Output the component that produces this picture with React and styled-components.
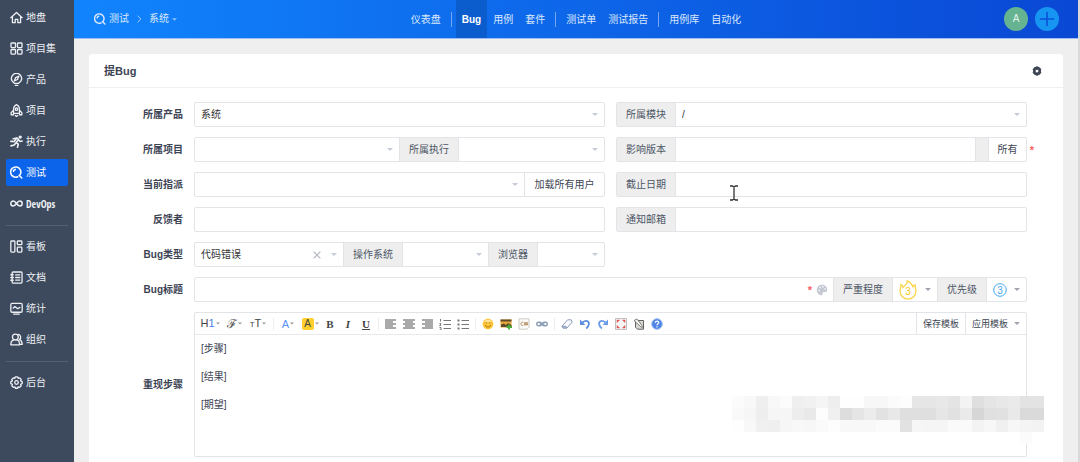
import React from 'react'
import styled, { createGlobalStyle, css } from 'styled-components'

const GlobalStyle = createGlobalStyle`
  * {
    box-sizing: border-box;
  }
  body {
    margin: 0;
    background: #efefef;
    color: #3c4353;
    font-family: 'Liberation Sans', 'Noto Sans CJK SC', sans-serif;
    font-size: 10px;
    line-height: 16px;
  }
  button, input, select {
    margin: 0;
    padding: 0;
    border: 0;
    background: none;
    color: inherit;
    font: inherit;
  }
  a {
    color: inherit;
    text-decoration: none;
  }
`

/* ---------- icons ---------- */

const LineIcon = styled.svg.attrs({ viewBox: '0 0 16 16' })`
  flex: none;
  width: ${p => p.$size || 13}px;
  height: ${p => p.$size || 13}px;
  fill: none;
  stroke: currentColor;
  stroke-width: ${p => p.$weight || 1.6};
  stroke-linecap: round;
  stroke-linejoin: round;
`

const SearchIcon = props => (
  <LineIcon $weight={1.9} {...props}>
    <path d="M9.600 13.200A6.300 6.300 0 1 1 12.600 10.400M11.200 11.400l3.300 3.400M4.200 6.400A3.400 3.400 0 0 1 6.400 4.200" />
  </LineIcon>
)

const icons = {
  home: <LineIcon><path d="M1 8.2 8 1.8l7 6.4M3 7.2v7.2h3.4v-4h3.2v4H13V7.2" /></LineIcon>,
  grid: (
    <LineIcon>
      <rect x="1.2" y="1.2" width="5.6" height="5.6" rx="1" />
      <rect x="9.2" y="1.2" width="5.6" height="5.6" rx="1" />
      <rect x="1.2" y="9.2" width="5.6" height="5.6" rx="1" />
      <rect x="9.2" y="9.2" width="5.6" height="5.6" rx="1" />
    </LineIcon>
  ),
  product: (
    <LineIcon>
      <path d="M5.600 12.800C3 11 1.600 9 1.600 6.900a6.400 6.400 0 0 1 12.800 0c0 2.100-1.400 4.100-4 5.900z" />
      <path d="M6.400 15.200h3.200M11 3.800 9.200 8 5.200 9.800 7 5.600z" />
    </LineIcon>
  ),
  project: (
    <LineIcon>
      <path d="M4.400 11.600V6.200C4.400 4 6 1.800 8 .8c2 1 3.600 3.200 3.600 5.400v5.400zM4.400 7.600 1.400 10.800v2.400h3M11.600 7.600l3 3.200v2.400h-3M6.600 14.200 8 15.400l1.400-1.200" />
      <circle cx="8" cy="6.400" r="1.500" />
    </LineIcon>
  ),
  run: (
    <LineIcon $weight={2}>
      <circle cx="12.600" cy="2.600" r="1.100" fill="currentColor" />
      <path d="M4 4.600 8.400 3.600 10.600 5.400 7.400 9.400 10.200 11.200 9.200 15M7.200 9.800 5.200 12.400 1.200 13.400M10.400 5.800l2 2.200 2.600-.6M8 4.400 5 8.200M1 7.800h2.400" />
    </LineIcon>
  ),
  test: <SearchIcon />,
  devops: (
    <LineIcon $weight={1.8}>
      <path d="M8 8C6.600 6 5.600 5 4 5a3 3 0 0 0 0 6c1.600 0 2.600-1 4-3s2.400-3 4-3a3 3 0 0 1 0 6c-1.600 0-2.600-1-4-3z" />
    </LineIcon>
  ),
  kanban: (
    <LineIcon>
      <rect x="1" y="1.200" width="5" height="13.600" rx="1" />
      <rect x="9" y="1.200" width="5.600" height="4.600" rx="1" />
      <rect x="9" y="8.800" width="5.600" height="6" rx="1" />
    </LineIcon>
  ),
  doc: (
    <LineIcon>
      <rect x="2.600" y="1.200" width="12.200" height="13.600" rx="1.200" />
      <path d="M1 4.600h3M1 8h3M1 11.400h3M7 4.800h5M7 8h5M7 11.200h5" />
    </LineIcon>
  ),
  chart: (
    <LineIcon>
      <rect x="1" y="1.800" width="14" height="10.800" rx="1.600" />
      <path d="M3.800 7.600 6 5.600l3.400 2.600 2.800-1.400M4.600 15h6.800" />
    </LineIcon>
  ),
  team: (
    <LineIcon>
      <circle cx="6.600" cy="5" r="3.600" />
      <path d="M1 14.600c0-3.400 1.600-5.400 3.800-6M8.400 8.600c2.200.6 3.400 2.600 3.400 6H1M10 1.800a3.500 3.500 0 0 1 1.600 6.400c2.200.8 3.400 2.800 3.400 5.800h-3" />
    </LineIcon>
  ),
  admin: (
    <LineIcon>
      <path d="M6.600 1h2.800l.6 1.900 1.900-.6 1.900 2-.8 1.800 2 .8v2.500l-2 .8.8 1.800-1.900 2-1.900-.7-.6 1.800H6.600L6 13.300l-1.900.7-1.900-2 .8-1.800-2-.8V6.900l2-.8-.8-1.800 1.900-2 1.900.6z" />
      <circle cx="8" cy="8" r="2.200" />
    </LineIcon>
  ),
}

const CaretSvg = styled.svg.attrs({ viewBox: '0 0 6 3' })`
  flex: none;
  width: ${p => p.$width || 6}px;
  height: 3px;
  fill: currentColor;
`

const Caret = props => <CaretSvg {...props}><path d="M0 0h6L3 3z" /></CaretSvg>

/* ---------- frame ---------- */

const Shell = styled.div`
  display: flex;
  min-height: 100vh;
`

const Sidebar = styled.nav`
  flex: none;
  width: 74px;
  padding: 4px 6px;
  background: #3d4a5d;
`

const MenuList = styled.ul`
  display: flex;
  flex-direction: column;
  gap: 4px;
  margin: 0;
  padding: 0;
  list-style: none;

  & + & {
    margin-top: 8px;
    padding-top: 7px;
    border-top: 1px solid #536072;
  }
`

const MenuLink = styled.a`
  display: flex;
  align-items: center;
  gap: 3px;
  height: 27px;
  padding-left: 4px;
  border-radius: 2px;
  color: #eef0f4;
  white-space: nowrap;
  ${p => p.$narrow && css`
    font-family: 'Liberation Sans Narrow', 'Open Sans Condensed', 'Roboto Condensed', 'Liberation Sans', sans-serif;
  `}
  ${p => p.$active && css`
    background: #0c64eb;
    color: #fff;
  `}
`

const Main = styled.div`
  display: flex;
  flex: 1;
  flex-direction: column;
  min-width: 0;
  border-right: 2px solid #d9d9d9;
`

const Header = styled.header`
  display: grid;
  flex: none;
  grid-template-columns: 1fr auto 1fr;
  align-items: center;
  height: 39px;
  border-bottom: 1px solid #9dbdf3;
  background: linear-gradient(90deg, #1184fd, #0a48d4);
  background-clip: padding-box;
  color: #dbe8fd;
`

const Crumbs = styled.div`
  display: flex;
  align-items: center;
  padding-left: 20px;
`

const CrumbLink = styled.a`
  display: flex;
  align-items: center;
  gap: 3px;
`

const CrumbArrow = styled(LineIcon)`
  margin: 0 5px;
  opacity: 0.7;
`

const TopNav = styled.nav`
  display: flex;
  align-items: center;
`

const TopLink = styled.a`
  height: 38px;
  padding: 0 6px;
  line-height: 40px;
  ${p => p.$active && css`
    background: #0b5ccd;
    color: #fff;
    font-weight: bold;
  `}
`

const TopDivider = styled.span`
  width: 1px;
  height: 15px;
  margin: 0 4px;
  background: #75a5f4;
`

const UserTools = styled.div`
  display: flex;
  justify-content: flex-end;
  gap: 7px;
  padding-right: 19px;
`

const RoundButton = styled.button`
  display: flex;
  align-items: center;
  justify-content: center;
  width: 24px;
  height: 24px;
  border-radius: 50%;
  background: ${p => p.$bg};
  color: ${p => p.$color};
`

const Card = styled.main`
  flex: 1;
  margin: 15px 15px 0;
  border-radius: 3px 3px 0 0;
  background: #fff;
`

const CardHead = styled.div`
  display: flex;
  align-items: center;
  justify-content: space-between;
  height: 34px;
  padding: 0 21px 0 15px;
  border-bottom: 1px solid #f0f0f0;
`

const CardTitle = styled.h1`
  margin: 0;
  font-size: 11px;
  font-weight: bold;
`

const IconButton = styled.button`
  display: flex;
`

/* ---------- form ---------- */

const Form = styled.form`
  display: grid;
  grid-template-columns: 94px minmax(0, 1fr) minmax(0, 1fr);
  gap: 10px 11px;
  padding: 14px 36px 5px 0;
`

const Label = styled.label`
  grid-column: 1;
  align-self: center;
  font-weight: bold;
  text-align: right;
`

const Group = styled.div`
  position: relative;
  display: flex;
  grid-column: ${p => p.$col || 'auto'};
  height: 25px;
  border: 1px solid #e3e4e8;
  border-radius: 2px;
`

const Addon = styled.label`
  flex: none;
  width: ${p => p.$short ? 50 : 60}px;
  border: solid #e3e4e8;
  border-width: 0 1px;
  background: #eeeeee;
  color: #4d5666;
  line-height: 24px;
  text-align: center;

  &:first-child {
    width: 59px;
    border-left: 0;
  }
`

const Field = styled.input`
  flex: 1;
  min-width: 0;
  padding: 0 6px;
  outline: 0;
`

const PickWrap = styled.div`
  position: relative;
  display: flex;
  flex: ${p => p.$width ? `0 0 ${p.$width}px` : '1'};
  min-width: 0;
`

const PickSelect = styled.select`
  flex: 1;
  min-width: 0;
  padding: 0 6px;
  appearance: none;
  color: #333;
`

const PickCaret = styled(Caret)`
  position: absolute;
  top: 10px;
  right: 6px;
  color: #c6cbd8;
  pointer-events: none;
`

const ClearButton = styled.button`
  position: absolute;
  top: 4px;
  right: 22px;
  display: flex;
  align-items: center;
  height: 16px;
  color: #b5b9c3;
`

const SideButton = styled.button`
  flex: none;
  width: ${p => p.$wide ? 80 : 38}px;
  border-left: 1px solid #e3e4e8;
  line-height: 24px;
`

const Spacer = styled.span`
  flex: none;
  width: 13px;
  border-left: 1px solid #e3e4e8;
  background: #eeeeee;
`

const Required = styled.span`
  color: #ff5d5d;
  font-weight: bold;
  font-size: 11px;
  ${p => p.$outside && css`
    position: absolute;
    top: 4px;
    right: -8px;
  `}
`

const TitleMarks = styled.span`
  display: flex;
  align-items: center;
  gap: 4px;
  padding-right: 5px;
  color: #c3c8d3;
`

const LevelButton = styled.button`
  display: flex;
  flex: none;
  align-items: center;
  justify-content: space-between;
  width: ${p => p.$width}px;
  padding: 0 6px;
  color: #a0a4ae;
`

const Pick = ({ id, value = '', clearable, width }) => (
  <PickWrap $width={width}>
    <PickSelect id={id} defaultValue={value}>
      <option value={value}>{value}</option>
    </PickSelect>
    {clearable && (
      <ClearButton type="button" aria-label="清除">
        <LineIcon $size={8} $weight={2.2}><path d="m2 2 12 12M14 2 2 14" /></LineIcon>
      </ClearButton>
    )}
    <PickCaret />
  </PickWrap>
)

/* ---------- editor ---------- */

const Editor = styled.div`
  position: relative;
  grid-column: 2 / 4;
  height: 145px;
  border: 1px solid #e3e4e8;
  border-radius: 2px;
`

const Toolbar = styled.div`
  display: flex;
  height: 22px;
  padding-left: 3px;
  border-bottom: 1px solid #e9e9ec;
`

const Tool = styled.button`
  display: flex;
  flex: none;
  align-items: center;
  justify-content: center;
  gap: 1px;
  width: ${p => p.$width || 18}px;
  color: #999;
`

const ToolDivider = styled.span`
  flex: none;
  align-self: center;
  width: 1px;
  height: 12px;
  margin: 0 3px;
  background: #eeeeee;
`

const ToolIcon = styled.svg.attrs({ viewBox: '0 0 12 12' })`
  width: 12px;
  height: 12px;
  fill: none;
`

const Glyph = styled.span`
  color: ${p => p.$color || '#444'};
  font-family: ${p => p.$serif ? "'Liberation Serif', 'DejaVu Serif', serif" : 'inherit'};
  font-size: ${p => p.$size || 11}px;
  font-weight: ${p => p.$bold ? 'bold' : 'normal'};
  font-style: ${p => p.$italic ? 'italic' : 'normal'};
  text-decoration: ${p => p.$underline ? 'underline' : 'none'};
  line-height: 12px;
`

const Marker = styled(Glyph)`
  width: 12px;
  border-radius: 2px;
  background: #ffd02f;
  text-align: center;
`

const Templates = styled.div`
  display: flex;
  margin-left: auto;
`

const TemplateButton = styled.button`
  display: flex;
  align-items: center;
  gap: 6px;
  padding: 0 6px;
  border-left: 1px solid #e3e4e8;
  font-size: 9px;
  white-space: nowrap;

  svg {
    color: #a0a4ae;
  }
`

const Content = styled.div`
  padding: 5px 6px;
  outline: 0;

  p {
    margin: 0 0 10px;
    line-height: 18px;
  }
`

const Watermark = styled.svg.attrs({ viewBox: '0 0 26 4' })`
  position: absolute;
  right: -18px;
  bottom: 12px;
  width: 312px;
  height: 48px;
  pointer-events: none;
`

const Pointer = styled.svg.attrs({ viewBox: '0 0 10 16' })`
  position: absolute;
  top: 12px;
  left: 112px;
  width: 10px;
  height: 16px;
  pointer-events: none;
`

// grey level of every mosaic cell, two hex digits each
const mosaic = [
  'fbf8eff8fceff1f5eefefef7f7fbfde6e6e8e4f3dfe5e8eae3e3',
  'f9f6eef6f6ede9fdf0dde5ece2e8dfdfdfe6e1ead6e0e1e9dada',
  'fef8f0eff6f8f7fafdf8f8f8fbfbe2f6f5f5fafaf3f7f0f7f4f3',
  'fffffffffffffffffffffffffffffffffffffffffffffffffbff',
]

const Mosaic = () => (
  <Watermark shapeRendering="crispEdges" aria-hidden="true">
    {mosaic.map((row, y) => row.match(/../g).map((tone, x) => (
      tone !== 'ff' && <rect key={`${x}-${y}`} x={x} y={y} width="1" height="1" fill={`#${tone}${tone}${tone}`} />
    )))}
  </Watermark>
)

const lineRows = [2, 4, 6, 8, 10]
const alignments = {
  左对齐: [[0, 11], [0, 8], [0, 11], [0, 8], [0, 11]],
  居中: [[0, 12], [2, 10], [0, 12], [2, 10], [0, 12]],
  右对齐: [[1, 12], [4, 12], [1, 12], [4, 12], [1, 12]],
}

const EditorTools = () => (
  <>
    <Tool type="button" $width={24} aria-label="标题"><span><Glyph>H</Glyph><Glyph $color="#4a7fe8">1</Glyph></span><Caret $width={4} /></Tool>
    <Tool type="button" $width={24} aria-label="字体"><Glyph $serif $size={12}>ℱ</Glyph><Caret $width={4} /></Tool>
    <Tool type="button" $width={24} aria-label="字号"><span><Glyph $size={8}>T</Glyph><Glyph>T</Glyph></span><Caret $width={4} /></Tool>
    <ToolDivider />
    <Tool type="button" $width={22} aria-label="文字颜色"><Glyph $color="#5b92f5">A</Glyph><Caret $width={4} /></Tool>
    <Tool type="button" $width={22} aria-label="背景颜色"><Marker $size={10}>A</Marker><Caret $width={4} /></Tool>
    <Tool type="button" aria-label="粗体"><Glyph $serif $bold>B</Glyph></Tool>
    <Tool type="button" aria-label="斜体"><Glyph $serif $bold $italic>I</Glyph></Tool>
    <Tool type="button" aria-label="下划线"><Glyph $serif $bold $underline>U</Glyph></Tool>
    <ToolDivider />
    {Object.entries(alignments).map(([name, lines]) => (
      <Tool type="button" key={name} aria-label={name}>
        <ToolIcon stroke="#555">
          {lines.map(([from, to], i) => <path key={i} d={`M${from} ${lineRows[i]}H${to}`} />)}
        </ToolIcon>
      </Tool>
    ))}
    <Tool type="button" aria-label="编号">
      <ToolIcon stroke="#777"><path d="M4.500 2.500H12M4.500 6.500H12M4.500 10.500H12M1.500 1v2.500M.5 5.500h1.500L.7 7.500H2M.5 9.500H2V12H.5" /></ToolIcon>
    </Tool>
    <Tool type="button" aria-label="项目符号">
      <ToolIcon stroke="#777"><path d="M4.500 2.500H12M4.500 6.500H12M4.500 10.500H12" /><path d="M.5 2.500h2M.5 6.500h2M.5 10.500h2" strokeWidth="2" /></ToolIcon>
    </Tool>
    <ToolDivider />
    <Tool type="button" aria-label="表情">
      <ToolIcon>
        <circle cx="6" cy="6" r="5.400" fill="#fcc73a" />
        <path d="M2 4a4.400 4.400 0 0 1 8 0z" fill="#fff" opacity=".5" />
        <path d="M3 7a3.200 3.200 0 0 0 6 0" stroke="#b0700c" />
        <path d="M4.200 4v1.500M7.800 4v1.500" stroke="#b98225" />
      </ToolIcon>
    </Tool>
    <Tool type="button" aria-label="图片">
      <ToolIcon>
        <path d="M.5 1.500h11v8H.5z" fill="#e9a83e" />
        <path d="M.5 1.500h11v2H.5zM1 6.500l3-1 2 1.500L8 5l3.500 2v2H1z" fill="#5d4a28" />
        <path d="M9 6.500v5M6.500 9H12" stroke="#49ad3b" strokeWidth="1.800" />
      </ToolIcon>
    </Tool>
    <Tool type="button" aria-label="代码">
      <ToolIcon>
        <path d="M1 .8h10v8.400l-2 2H1z" fill="#fbfaf8" stroke="#d0ccc5" />
        <path d="M5.400 4.300a1.700 1.700 0 1 0 0 3M7 4v3.500M9 4v3.500M6.300 5h3.400M6.300 6.500h3.400" stroke="#b28b5d" />
      </ToolIcon>
    </Tool>
    <Tool type="button" aria-label="链接">
      <ToolIcon stroke="#8b9cb5" strokeWidth="1.400">
        <rect x=".7" y="4.200" width="4.800" height="3.600" rx="1.800" />
        <rect x="6.500" y="4.200" width="4.800" height="3.600" rx="1.800" />
        <path d="M3.500 6h5" />
      </ToolIcon>
    </Tool>
    <ToolDivider />
    <Tool type="button" aria-label="清除格式">
      <ToolIcon stroke="#8f9dbd">
        <path d="M1 8.300 6.600 1.800h3.600L11.200 4 6 10H2z" fill="#f8faff" />
        <path d="M1 8.300h4L6 10H2z" fill="#b9c5e0" />
      </ToolIcon>
    </Tool>
    <Tool type="button" aria-label="撤销">
      <ToolIcon>
        <path d="M3.500 4.500C7 1.500 10.500 3 9.800 6.500c-.3 1.800-1.300 3-2.600 4" stroke="#5f8ee0" strokeWidth="1.800" />
        <path d="M1 1.500V7h5.400z" fill="#5f8ee0" />
      </ToolIcon>
    </Tool>
    <Tool type="button" aria-label="重做">
      <ToolIcon>
        <path d="M8.500 4.500C5 1.500 1.500 3 2.200 6.500c.3 1.800 1.300 3 2.600 4" stroke="#6b9be6" strokeWidth="1.800" />
        <path d="M11 1.500V7H5.600z" fill="#6b9be6" />
      </ToolIcon>
    </Tool>
    <Tool type="button" aria-label="全屏">
      <ToolIcon>
        <path d="M.5.5h11v11H.5z" fill="#f6f5f5" stroke="#c2bfbf" />
        <path d="M2 2h2.500L2 4.500zM10 2v2.500L7.500 2zM2 10V7.500L4.500 10zM10 10H7.500L10 7.500z" fill="#d9534f" stroke="#d9534f" strokeWidth=".5" />
      </ToolIcon>
    </Tool>
    <Tool type="button" aria-label="源代码">
      <ToolIcon>
        <path d="M2.500 2.500h8v8.700h-6l-2-2z" fill="#d9d9d6" stroke="#63635f" />
        <path d="M1 2.500 4 1l5 6.500.3 2-1.800-1z" fill="#f4f4f2" stroke="#63635f" strokeWidth=".8" />
      </ToolIcon>
    </Tool>
    <Tool type="button" aria-label="帮助">
      <ToolIcon>
        <circle cx="6" cy="6" r="5.300" fill="#4f86e6" stroke="#9bb9ef" />
        <path d="M4.300 4.800C4.300 2.600 7.800 2.700 7.700 4.700 7.600 5.800 6 5.900 6 7.200M6 8.300v1.200" stroke="#fff" strokeWidth="1.200" />
      </ToolIcon>
    </Tool>
  </>
)

const menus = [
  [
    ['home', '地盘'],
    ['grid', '项目集'],
    ['product', '产品'],
    ['project', '项目'],
    ['run', '执行'],
    ['test', '测试'],
    ['devops', 'DevOps'],
  ],
  [
    ['kanban', '看板'],
    ['doc', '文档'],
    ['chart', '统计'],
    ['team', '组织'],
  ],
  [
    ['admin', '后台'],
  ],
]

const topMenu = ['仪表盘', '|', 'Bug', '用例', '套件', '|', '测试单', '测试报告', '|', '用例库', '自动化']

const BugForm = () => (
  <Form>
    <Label htmlFor="product">所属产品</Label>
    <Group><Pick id="product" value="系统" /></Group>
    <Group>
      <Addon htmlFor="module">所属模块</Addon>
      <Pick id="module" value="/" />
    </Group>

    <Label htmlFor="project">所属项目</Label>
    <Group>
      <Pick id="project" />
      <Addon htmlFor="execution">所属执行</Addon>
      <Pick id="execution" width={145} />
    </Group>
    <Group>
      <Addon htmlFor="build">影响版本</Addon>
      <Field id="build" />
      <Spacer />
      <SideButton type="button">所有</SideButton>
      <Required $outside>*</Required>
    </Group>

    <Label htmlFor="assigned">当前指派</Label>
    <Group>
      <Pick id="assigned" />
      <SideButton type="button" $wide>加载所有用户</SideButton>
    </Group>
    <Group>
      <Addon htmlFor="deadline">截止日期</Addon>
      <Field id="deadline" />
      <Pointer aria-hidden="true">
        <path d="M1 1h2.500L5 2l1.500-1H9M5 2v12M1 15h2.500L5 14l1.500 1H9" fill="none" stroke="#333" strokeWidth="1.300" />
      </Pointer>
    </Group>

    <Label htmlFor="feedback">反馈者</Label>
    <Group><Field id="feedback" /></Group>
    <Group>
      <Addon htmlFor="mail">通知邮箱</Addon>
      <Field id="mail" />
    </Group>

    <Label htmlFor="type">Bug类型</Label>
    <Group $col="2">
      <Pick id="type" value="代码错误" clearable />
      <Addon htmlFor="os">操作系统</Addon>
      <Pick id="os" width={85} />
      <Addon htmlFor="browser" $short>浏览器</Addon>
      <Pick id="browser" width={66} />
    </Group>

    <Label htmlFor="title">Bug标题</Label>
    <Group $col="2 / 4">
      <Field id="title" />
      <TitleMarks>
        <Required>*</Required>
        <LineIcon $size={12}>
          <path
            d="M8 1C4 1 1 4 1 8s3 7 6.500 7c1.500 0 1.500-1 1.200-2-.4-1.300.2-2.500 1.800-2.500h2c1.500 0 2.500-1 2.500-2.700C15 4 12 1 8 1z"
            fill="currentColor"
            stroke="none"
          />
          <g fill="#fff" stroke="none">
            <circle cx="4.200" cy="8.600" r="1.100" />
            <circle cx="5.400" cy="4.800" r="1.100" />
            <circle cx="9.200" cy="3.800" r="1.100" />
            <circle cx="12.200" cy="6.600" r="1.100" />
          </g>
        </LineIcon>
      </TitleMarks>
      <Addon htmlFor="severity">严重程度</Addon>
      <LevelButton type="button" id="severity" $width={44}>
        <svg width="18" height="20" viewBox="0 0 18 20" fill="none" stroke="#fbd54a" strokeWidth="1.300">
          <path d="M4 7.500C3.800 6 3 5 2 4.600c.3 2-.9 3.800-.9 6.600a7.900 7.900 0 0 0 15.800 0c0-2.600-1-4.300-.9-6.400-1.200.3-1.800 1.400-2 2.600C13 4 11 2 8.200.9 8.700 4 5.700 5 4 7.500z" />
          <text x="9" y="15" textAnchor="middle" fontSize="10" fill="#f6c521" stroke="none">3</text>
        </svg>
        <Caret />
      </LevelButton>
      <Addon htmlFor="pri" $short>优先级</Addon>
      <LevelButton type="button" id="pri" $width={39}>
        <svg width="14" height="14" viewBox="0 0 14 14">
          <circle cx="7" cy="7" r="6.300" fill="none" stroke="#3fa7f0" />
          <text x="7" y="10.500" textAnchor="middle" fontSize="10" fill="#3fa7f0">3</text>
        </svg>
        <Caret />
      </LevelButton>
    </Group>

    <Label as="span">重现步骤</Label>
    <Editor>
      <Toolbar>
        <EditorTools />
        <Templates>
          <TemplateButton type="button">保存模板</TemplateButton>
          <TemplateButton type="button">应用模板 <Caret /></TemplateButton>
        </Templates>
      </Toolbar>
      <Content contentEditable suppressContentEditableWarning role="textbox" aria-label="重现步骤">
        <p>[步骤]</p>
        <p>[结果]</p>
        <p>[期望]</p>
      </Content>
      <Mosaic />
    </Editor>
  </Form>
)

const App = () => (
  <Shell>
    <GlobalStyle />
    <Sidebar>
      {menus.map((items, i) => (
        <MenuList key={i}>
          {items.map(([icon, text]) => (
            <li key={icon}>
              <MenuLink href="#" $active={icon === 'test'} $narrow={icon === 'devops'}>
                {icons[icon]}
                {text}
              </MenuLink>
            </li>
          ))}
        </MenuList>
      ))}
    </Sidebar>
    <Main>
      <Header>
        <Crumbs>
          <CrumbLink href="#"><SearchIcon $size={12} />测试</CrumbLink>
          <CrumbArrow $size={10}><path d="m6 3 5 5-5 5" /></CrumbArrow>
          <CrumbLink href="#">系统<Caret $width={5} opacity=".6" /></CrumbLink>
        </Crumbs>
        <TopNav>
          {topMenu.map((text, i) => (
            text === '|'
              ? <TopDivider key={i} />
              : <TopLink key={i} href="#" $active={text === 'Bug'}>{text}</TopLink>
          ))}
        </TopNav>
        <UserTools>
          <RoundButton type="button" $bg="#65b391" $color="#e4f3ec">A</RoundButton>
          <RoundButton type="button" $bg="#1795f2" $color="#0b50d8" aria-label="添加">
            <LineIcon $size={16}><path d="M8 1.500v13M1.500 8h13" /></LineIcon>
          </RoundButton>
        </UserTools>
      </Header>
      <Card>
        <CardHead>
          <CardTitle>提Bug</CardTitle>
          <IconButton type="button" aria-label="设置">
            <LineIcon $size={10}>
              <path
                fill="currentColor"
                fillRule="evenodd"
                d="M5.600 3.400 6 1.500h4l.4 1.900 1.900-.6 2 3.400L12.900 8l1.400 1.800-2 3.400-1.900-.6-.4 1.900H6l-.4-1.900-1.900.6-2-3.400L3.100 8 1.700 6.200l2-3.400zM8 4.800a3.200 3.200 0 1 0 0 6.400 3.200 3.200 0 0 0 0-6.400z"
              />
            </LineIcon>
          </IconButton>
        </CardHead>
        <BugForm />
      </Card>
    </Main>
  </Shell>
)

export default App
